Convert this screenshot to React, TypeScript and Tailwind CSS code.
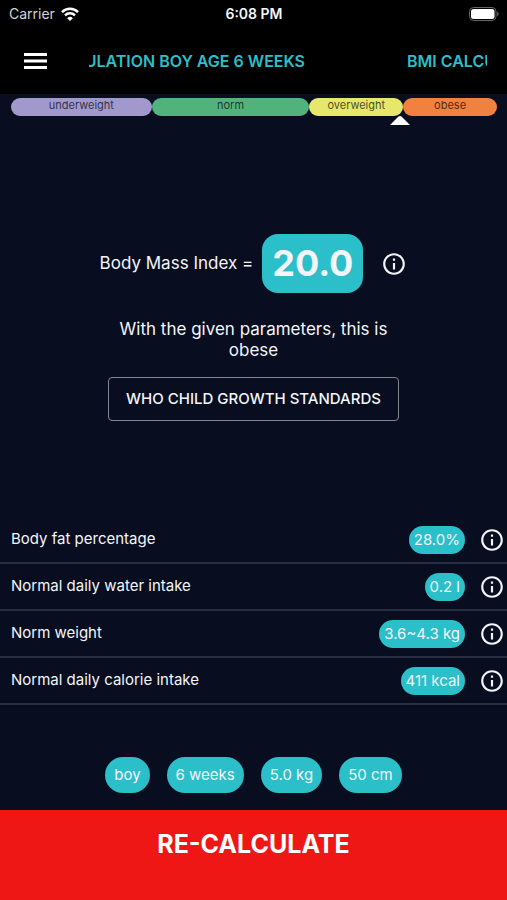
import React from 'react';
import { MdInfoOutline } from 'react-icons/md';

const ranges = [
  { label: 'underweight', className: 'flex-[141] bg-[#a199cd]' },
  { label: 'norm', className: 'flex-[158] bg-[#52b27b]' },
  { label: 'overweight', className: 'flex-[94] bg-[#e6e76b]' },
  { label: 'obese', className: 'flex-[94] bg-[#f0813f]' },
];

const metrics = [
  { label: 'Body fat percentage', value: '28.0%' },
  { label: 'Normal daily water intake', value: '0.2 l' },
  { label: 'Norm weight', value: '3.6~4.3 kg' },
  { label: 'Normal daily calorie intake', value: '411 kcal' },
];

const params = ['boy', '6 weeks', '5.0 kg', '50 cm'];

function StatusBar() {
  return (
    <div className="grid h-7 grid-cols-3 items-center pr-2 pl-[9px] text-sm">
      <div className="flex items-center gap-1.5 text-[#d4d4d4]">
        Carrier
        <svg viewBox="0 0 18 14" className="h-[14px] w-[18px]" fill="none" stroke="white" strokeWidth="2.5">
          <path d="M1 5.1a11.4 11.4 0 0 1 16 0" />
          <path d="M4 8.3a7.1 7.1 0 0 1 10 0" />
          <path d="M9 14 6.2 11.2a4 4 0 0 1 5.6 0z" fill="white" stroke="none" />
        </svg>
      </div>
      <div className="text-center font-semibold whitespace-nowrap">6:08 PM</div>
      <svg viewBox="0 0 30 14" className="h-[14px] w-[30px] justify-self-end" aria-label="Battery full">
        <rect x="0.5" y="0.5" width="26.5" height="13" rx="4" fill="none" stroke="#666" />
        <rect x="2" y="2" width="23.5" height="10" rx="2.5" fill="white" />
        <path d="M28.3 4.8c1.7.6 1.7 3.8 0 4.4z" fill="#777" />
      </svg>
    </div>
  );
}

function Header() {
  return (
    <header className="flex h-[66px] items-center pr-5 pl-6">
      <button type="button" aria-label="Menu" className="flex h-10 w-[65px] shrink-0 items-center">
        <svg viewBox="0 0 23 16" className="h-4 w-[23px]" fill="white">
          <rect width="23" height="3" />
          <rect y="6.5" width="23" height="3" />
          <rect y="13" width="23" height="3" />
        </svg>
      </button>
      {/* Ticker title, the second copy follows the first */}
      <div className="flex min-w-0 flex-1 gap-[102px] overflow-hidden text-base font-semibold whitespace-nowrap text-[#2bbfc9]">
        <div className="flex w-[216px] shrink-0 justify-end overflow-hidden">
          <span>BMI CALCULATION BOY AGE 6 WEEKS</span>
        </div>
        <span className="min-w-0 flex-1 overflow-hidden">BMI CALCULATION BOY AGE 6 WEEKS</span>
      </div>
    </header>
  );
}

function Scale() {
  return (
    <div className="pt-1 pr-[10px] pl-[11px]">
      <div className="relative flex">
        {ranges.map((range) => (
          <div
            key={range.label}
            className={`h-[18px] rounded-full text-center text-[11px] leading-[14px] text-black/70 ${range.className}`}
          >
            {range.label}
          </div>
        ))}
        <svg viewBox="0 0 20 9" className="absolute top-full left-[80%] h-[9px] w-5 -translate-x-1/2" fill="white">
          <path d="M0 9 8.5.6q1.5-1.2 3 0L20 9z" />
        </svg>
      </div>
    </div>
  );
}

function InfoButton({ label }: { label: string }) {
  return (
    <button type="button" aria-label={`About ${label}`} className="shrink-0">
      <MdInfoOutline className="size-[26px]" />
    </button>
  );
}

function Result() {
  return (
    <section className="flex flex-1 flex-col items-center justify-center pt-[22px] text-center">
      <div className="flex items-center">
        <span className="text-[17px]">Body Mass Index =</span>
        <span className="mr-[18px] ml-[9px] rounded-2xl bg-[#2bbfc9] px-[10px] text-4xl leading-[59px] font-bold">
          20.0
        </span>
        <InfoButton label="Body Mass Index" />
      </div>
      <p className="mt-[26px] w-[290px] text-[17px] leading-[21px]">With the given parameters, this is obese</p>
      <button
        type="button"
        className="mt-4 h-11 rounded border border-[#84868f] px-[17px] text-[15px] font-medium"
      >
        WHO CHILD GROWTH STANDARDS
      </button>
    </section>
  );
}

export default function App() {
  return (
    <div className="flex min-h-screen flex-col bg-[#080d1f] font-['Inter',sans-serif] text-[#f4f5fa]">
      <div className="bg-black">
        <StatusBar />
        <Header />
      </div>
      <Scale />
      <Result />
      <ul>
        {metrics.map((metric) => (
          <li key={metric.label} className="flex h-[47px] items-center border-b-2 border-[#2a2e3f] pr-0.5 pl-[11px] text-[15px]">
            <span className="flex-1">{metric.label}</span>
            <span className="mr-3.5 rounded-full bg-[#2bbfc9] px-[5px] leading-7">{metric.value}</span>
            <InfoButton label={metric.label} />
          </li>
        ))}
      </ul>
      <div className="flex justify-center gap-[17px] pt-[52px] pb-[17px] text-[15px]">
        {params.map((param) => (
          <span key={param} className="rounded-full bg-[#2bbfc9] px-[9px] leading-9">
            {param}
          </span>
        ))}
      </div>
      <button type="button" className="flex h-[90px] justify-center bg-[#ee1715] pt-[18px] text-[25px] leading-8 font-bold text-white">
        RE-CALCULATE
      </button>
    </div>
  );
}
